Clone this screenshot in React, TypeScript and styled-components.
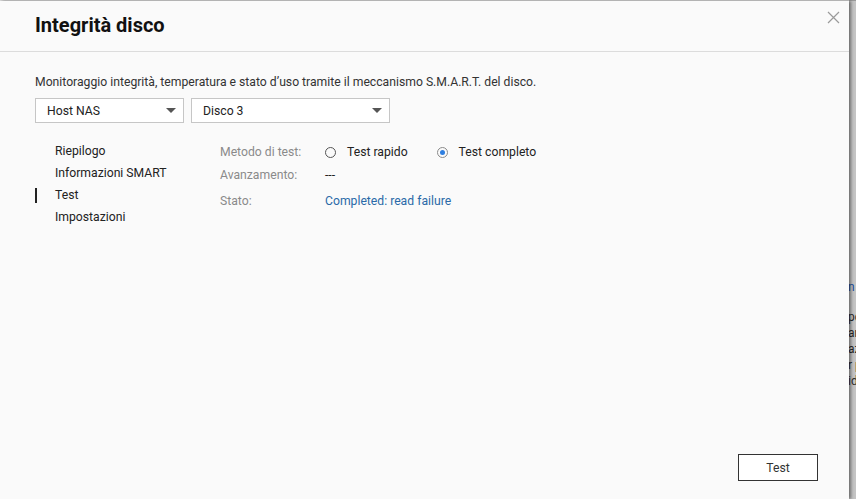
import styled, { createGlobalStyle } from 'styled-components'

const GlobalStyle = createGlobalStyle`
  html, body {
    margin: 0;
    padding: 0;
    height: 100%;
    overflow: hidden;
  }
  body {
    font-family: Roboto, "Liberation Sans", sans-serif;
    background: #d9d9d9;
  }
`

const Page = styled.div`
  display: flex;
  width: 856px;
  height: 499px;
`

const Dialog = styled.div`
  width: 849px;
  height: 498px;
  margin-top: 1px;
  background: #fafafa;
  display: flex;
  flex-direction: column;
  box-shadow: 2px 0 3px rgba(0, 0, 0, 0.45);
  position: relative;
  z-index: 1;
`

const Backdrop = styled.div`
  flex: 1;
  background: #c4c4c4;
  display: flex;
  flex-direction: column;
  padding-top: 42px;
  border-top: 1px solid #999;
  font-size: 12px;
  color: #222;
  overflow: hidden;
  white-space: nowrap;
  line-height: 16px;
`

const BackdropLine = styled.div<{ $blue?: boolean; $gap?: number }>`
  color: ${p => (p.$blue ? '#1b4fa0' : '#2a2a2a')};
  margin-top: ${p => p.$gap ?? 0}px;
  margin-left: -1px;
`

const Header = styled.div`
  height: 50px;
  border-bottom: 1px solid #dcdcdc;
  display: flex;
  align-items: center;
  justify-content: space-between;
  padding: 0 9px 0 35px;
`

const Title = styled.h1`
  margin: 0 0 2px;
  font-size: 20px;
  font-weight: 700;
  color: #111;
`

const Close = styled.button`
  border: none;
  background: none;
  padding: 0;
  align-self: flex-start;
  margin-top: 10px;
  cursor: pointer;
  display: flex;
`

const Body = styled.div`
  flex: 1;
  display: flex;
  flex-direction: column;
  padding: 21px 35px 18px 35px;
  font-size: 12.2px;
`

const Description = styled.p`
  margin: 0;
  color: #333;
  line-height: 18px;
`

const SelectRow = styled.div`
  display: flex;
  gap: 7px;
  margin-top: 7px;
`

const Select = styled.div<{ $width: number }>`
  width: ${p => p.$width}px;
  height: 25px;
  box-sizing: border-box;
  border: 1px solid #c6c6c6;
  background: #fff;
  display: flex;
  align-items: center;
  justify-content: space-between;
  padding: 0 7px 0 11px;
  color: #222;
`

const Caret = styled.span`
  width: 0;
  height: 0;
  border-left: 5px solid transparent;
  border-right: 5px solid transparent;
  border-top: 5px solid #555;
`

const Content = styled.div`
  display: flex;
  margin-top: 17px;
  flex: 1;
`

const Nav = styled.ul`
  list-style: none;
  margin: 0;
  padding: 0;
  width: 185px;
`

const NavItem = styled.li<{ $active?: boolean }>`
  position: relative;
  padding-left: 20px;
  line-height: 22px;
  color: #222;
  &::before {
    content: '';
    display: ${p => (p.$active ? 'block' : 'none')};
    position: absolute;
    left: 0;
    top: 4px;
    width: 2px;
    height: 15px;
    background: #222;
  }
`

const Panel = styled.div`
  display: grid;
  grid-template-columns: 105px auto;
  align-content: start;
  padding-top: 3px;
`

const Label = styled.div<{ $h: number }>`
  color: #8a8a8a;
  height: ${p => p.$h}px;
  line-height: 18px;
`

const Value = styled.div<{ $h: number; $link?: boolean }>`
  height: ${p => p.$h}px;
  line-height: 18px;
  color: ${p => (p.$link ? '#2a6aa8' : '#222')};
  display: flex;
  align-items: flex-start;
`

const RadioGroup = styled.div`
  display: flex;
  gap: 29px;
`

const Radio = styled.label`
  display: flex;
  align-items: center;
  gap: 11px;
  height: 18px;
`

const Circle = styled.span<{ $checked?: boolean }>`
  width: 11px;
  height: 11px;
  box-sizing: border-box;
  border-radius: 50%;
  border: 1px solid ${p => (p.$checked ? '#8a8a8a' : '#555')};
  display: flex;
  align-items: center;
  justify-content: center;
  &::after {
    content: '';
    display: ${p => (p.$checked ? 'block' : 'none')};
    width: 5px;
    height: 5px;
    border-radius: 50%;
    background: #2f7fe0;
  }
`

const Footer = styled.div`
  display: flex;
  justify-content: flex-end;
`

const Button = styled.button`
  width: 80px;
  height: 27px;
  margin-right: -4px;
  background: #fff;
  border: 1px solid #333;
  font-family: inherit;
  font-size: 12.2px;
  color: #333;
  cursor: pointer;
`

function App() {
  return (
    <>
      <GlobalStyle />
      <Page>
        <Dialog>
          <Header>
            <Title>Integrità disco</Title>
            <Close aria-label="Chiudi">
              <svg width="13" height="13" viewBox="0 0 13 13">
                <path d="M1 1L12 12M12 1L1 12" stroke="#9a9a9a" strokeWidth="1.2" fill="none" />
              </svg>
            </Close>
          </Header>
          <Body>
            <Description>
              Monitoraggio integrità, temperatura e stato d’uso tramite il meccanismo S.M.A.R.T. del disco.
            </Description>
            <SelectRow>
              <Select $width={149}>
                Host NAS
                <Caret />
              </Select>
              <Select $width={199}>
                Disco 3
                <Caret />
              </Select>
            </SelectRow>
            <Content>
              <Nav>
                <NavItem>Riepilogo</NavItem>
                <NavItem>Informazioni SMART</NavItem>
                <NavItem $active>Test</NavItem>
                <NavItem>Impostazioni</NavItem>
              </Nav>
              <Panel>
                <Label $h={23}>Metodo di test:</Label>
                <Value $h={23}>
                  <RadioGroup>
                    <Radio>
                      <Circle />
                      Test rapido
                    </Radio>
                    <Radio>
                      <Circle $checked />
                      Test completo
                    </Radio>
                  </RadioGroup>
                </Value>
                <Label $h={26}>Avanzamento:</Label>
                <Value $h={26}>---</Value>
                <Label $h={22}>Stato:</Label>
                <Value $h={22} $link>Completed: read failure</Value>
              </Panel>
            </Content>
            <Footer>
              <Button>Test</Button>
            </Footer>
          </Body>
        </Dialog>
        <Backdrop>
          <BackdropLine $blue $gap={236}>n</BackdropLine>
          <BackdropLine $gap={14}>pc</BackdropLine>
          <BackdropLine>ar</BackdropLine>
          <BackdropLine>az</BackdropLine>
          <BackdropLine>r p</BackdropLine>
          <BackdropLine>id</BackdropLine>
        </Backdrop>
      </Page>
    </>
  )
}

export default App
